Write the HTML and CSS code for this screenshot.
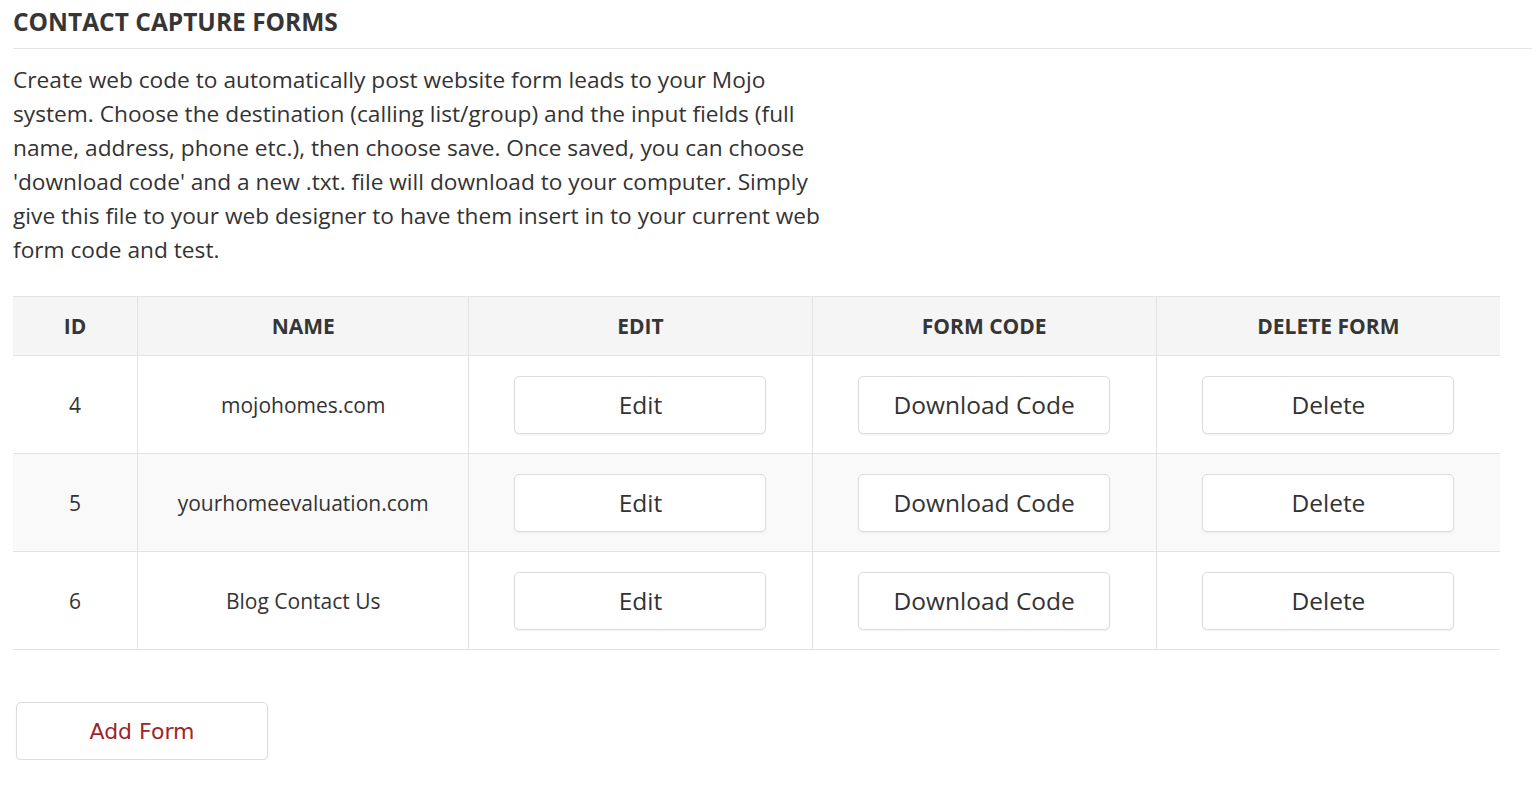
FILE: index.html
```html
<!DOCTYPE html>
<html>
<head>
<meta charset="utf-8">
<link rel="stylesheet" href="styles.css">
</head>
<body>
<div class="page">
  <h1 class="title">CONTACT CAPTURE FORMS</h1>
  <p class="intro">Create web code to automatically post website form leads to your Mojo system. Choose the destination (calling list/group) and the input fields (full name, address, phone etc.), then choose save. Once saved, you can choose 'download code' and a new .txt. file will download to your computer. Simply give this file to your web designer to have them insert in to your current web form code and test.</p>
  <table class="forms">
    <thead>
      <tr><th class="c-id">ID</th><th class="c-name">NAME</th><th class="c-edit">EDIT</th><th class="c-code">FORM CODE</th><th class="c-del">DELETE FORM</th></tr>
    </thead>
    <tbody>
      <tr><td>4</td><td>mojohomes.com</td><td><button class="btn">Edit</button></td><td><button class="btn">Download Code</button></td><td><button class="btn">Delete</button></td></tr>
      <tr class="alt"><td>5</td><td>yourhomeevaluation.com</td><td><button class="btn">Edit</button></td><td><button class="btn">Download Code</button></td><td><button class="btn">Delete</button></td></tr>
      <tr><td>6</td><td>Blog Contact Us</td><td><button class="btn">Edit</button></td><td><button class="btn">Download Code</button></td><td><button class="btn">Delete</button></td></tr>
    </tbody>
  </table>
  <div class="actions"><button class="btn add">Add Form</button></div>
</div>
</body>
</html>
```
FILE: styles.css
```css
html, body { margin: 0; padding: 0; background: #fff; }
body { font-family: "Open Sans", sans-serif; color: #333; }
.page { padding: 0 0 0 13px; }
.title {
  margin: 0;
  padding: 7px 0 12px 0;
  font-size: 24.5px;
  font-weight: 700;
  color: #363636;
  border-bottom: 1px solid #e5e5e5;
  line-height: 29px;
}
.intro {
  margin: 14px 0 0 0;
  width: 828px;
  font-size: 22.7px;
  line-height: 34px;
  color: #333;
}
.forms {
  margin-top: 29px;
  width: 1487px;
  border-collapse: collapse;
  font-size: 21px;
}
.forms th, .forms td {
  text-align: center;
  border-left: 1px solid #e3e3e3;
  border-top: 1px solid #e3e3e3;
  padding: 0;
}
.forms th:first-child, .forms td:first-child { border-left: none; }
.forms thead th {
  background: #f5f5f5;
  height: 58px;
  font-size: 21px;
  font-weight: 700;
  color: #363636;
}
.forms tbody td { height: 97px; color: #333; }
.forms tbody tr:last-child td { border-bottom: 1px solid #e3e3e3; }
.forms tr.alt td { background: #f9f9f9; }
.c-id { width: 125px; }
.c-name { width: 331px; }
.c-edit { width: 343px; }
.c-code { width: 344px; }
.c-del { width: 344px; }
.btn {
  width: 252px;
  height: 58px;
  background: #fff;
  border: 1px solid #dcdcdc;
  border-radius: 5px;
  box-shadow: 0 1px 2px rgba(0,0,0,0.06);
  font-family: "Open Sans", sans-serif;
  font-size: 24.5px;
  color: #333;
  cursor: pointer;
}
.actions { margin-top: 52px; padding-left: 3px; }
.btn.add {
  font-family: "DejaVu Sans", sans-serif;
  font-size: 22px;
  color: #a0252a;
}
```
